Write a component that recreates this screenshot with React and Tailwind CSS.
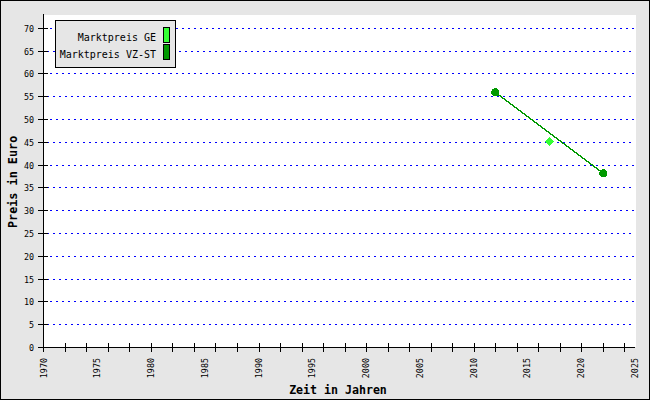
const mono = "font-['DejaVu_Sans_Mono',monospace]";

// JpGraph-artige Linienachsen: Pixel pro Einheit
const yOf = (v) => Math.floor(347.4 - v * 4.558);
const xOf = (year) => 43.5 + (year - 1970) * 10.75;

const yValues = Array.from({ length: 15 }, (_, i) => i * 5);
const xTicks = Array.from({ length: 28 }, (_, i) => Math.round(43.3 + i * 21.52));
const xLabels = Array.from({ length: 12 }, (_, i) => 1970 + i * 5);

function Chart() {
  return (
    <svg viewBox="19 1 630 381" width="630" height="381" className="block">
      <rect x="44" y="15" width="592" height="332" fill="#ffffff" />

      {yValues.slice(1).map((v) => (
        <line
          key={v}
          x1={(70 - v) % 10 === 0 ? 44 : 47}
          x2="635"
          y1={yOf(v) + 0.5}
          y2={yOf(v) + 0.5}
          stroke="#0000ff"
          strokeDasharray="2 4"
          shapeRendering="crispEdges"
        />
      ))}

      {/* Achsen und Striche */}
      <g stroke="#000000" shapeRendering="crispEdges">
        <line x1="43.5" x2="43.5" y1="14" y2="348" />
        <line x1="43" x2="635" y1="347.5" y2="347.5" />
        {yValues.map((v) => (
          <line key={v} x1="38" x2="48" y1={yOf(v) + 0.5} y2={yOf(v) + 0.5} />
        ))}
        {xTicks.map((x) => (
          <line key={x} x1={x + 0.5} x2={x + 0.5} y1="343" y2="352" />
        ))}
      </g>

      <g className={mono} fontSize="8.4" fill="#000000">
        {yValues.map((v) => (
          <text key={v} x="34" y={yOf(v) + 3.5} textAnchor="end">
            {v}
          </text>
        ))}
        {xLabels.map((year) => (
          <text
            key={year}
            transform={`translate(${xOf(year) + 3} 358) rotate(-90)`}
            textAnchor="end"
          >
            {year}
          </text>
        ))}
      </g>

      {/* Messwerte */}
      <g shapeRendering="crispEdges">
        <line x1="495.3" y1="92.3" x2="603.3" y2="173.3" stroke="#009900" strokeWidth="1.5" />
        <circle cx="495.3" cy="92.3" r="4" fill="#009900" />
        <circle cx="603.3" cy="173.3" r="4" fill="#009900" />
        <polygon points="549.5,136.5 554,141.5 549.5,146.5 545,141.5" fill="#33ff33" />
      </g>
    </svg>
  );
}

function LegendRow({ label, color }) {
  return (
    <div className="flex h-[16px] items-center justify-end gap-[7px]">
      <span className="pt-[5px] text-[10px] leading-none text-black">{label}</span>
      <span className={`h-[16px] w-[7px] border border-black ${color}`} />
    </div>
  );
}

export default function App() {
  return (
    <div className={`relative flex h-[400px] w-[650px] border border-black bg-[#e6e6e6] ${mono}`}>
      <div className="flex w-[18px] items-center justify-center pb-[36px] pl-[9px]">
        <span className="shrink-0 -rotate-90 whitespace-nowrap text-[11.8px] font-bold leading-none text-black">
          Preis in Euro
        </span>
      </div>

      <div className="flex flex-col">
        <Chart />
        <div className="pl-[8px] pt-[1px] text-center text-[11.6px] font-bold leading-[14px] text-black">
          Zeit in Jahren
        </div>
      </div>

      <div className="absolute left-[54px] top-[19px] flex h-[48px] w-[121px] flex-col gap-[1px] border border-black bg-[#e6e6e6] pr-[5px] pt-[6px]">
        <LegendRow label="Marktpreis GE" color="bg-[#33ff33]" />
        <LegendRow label="Marktpreis VZ-ST" color="bg-[#009900]" />
      </div>
    </div>
  );
}
